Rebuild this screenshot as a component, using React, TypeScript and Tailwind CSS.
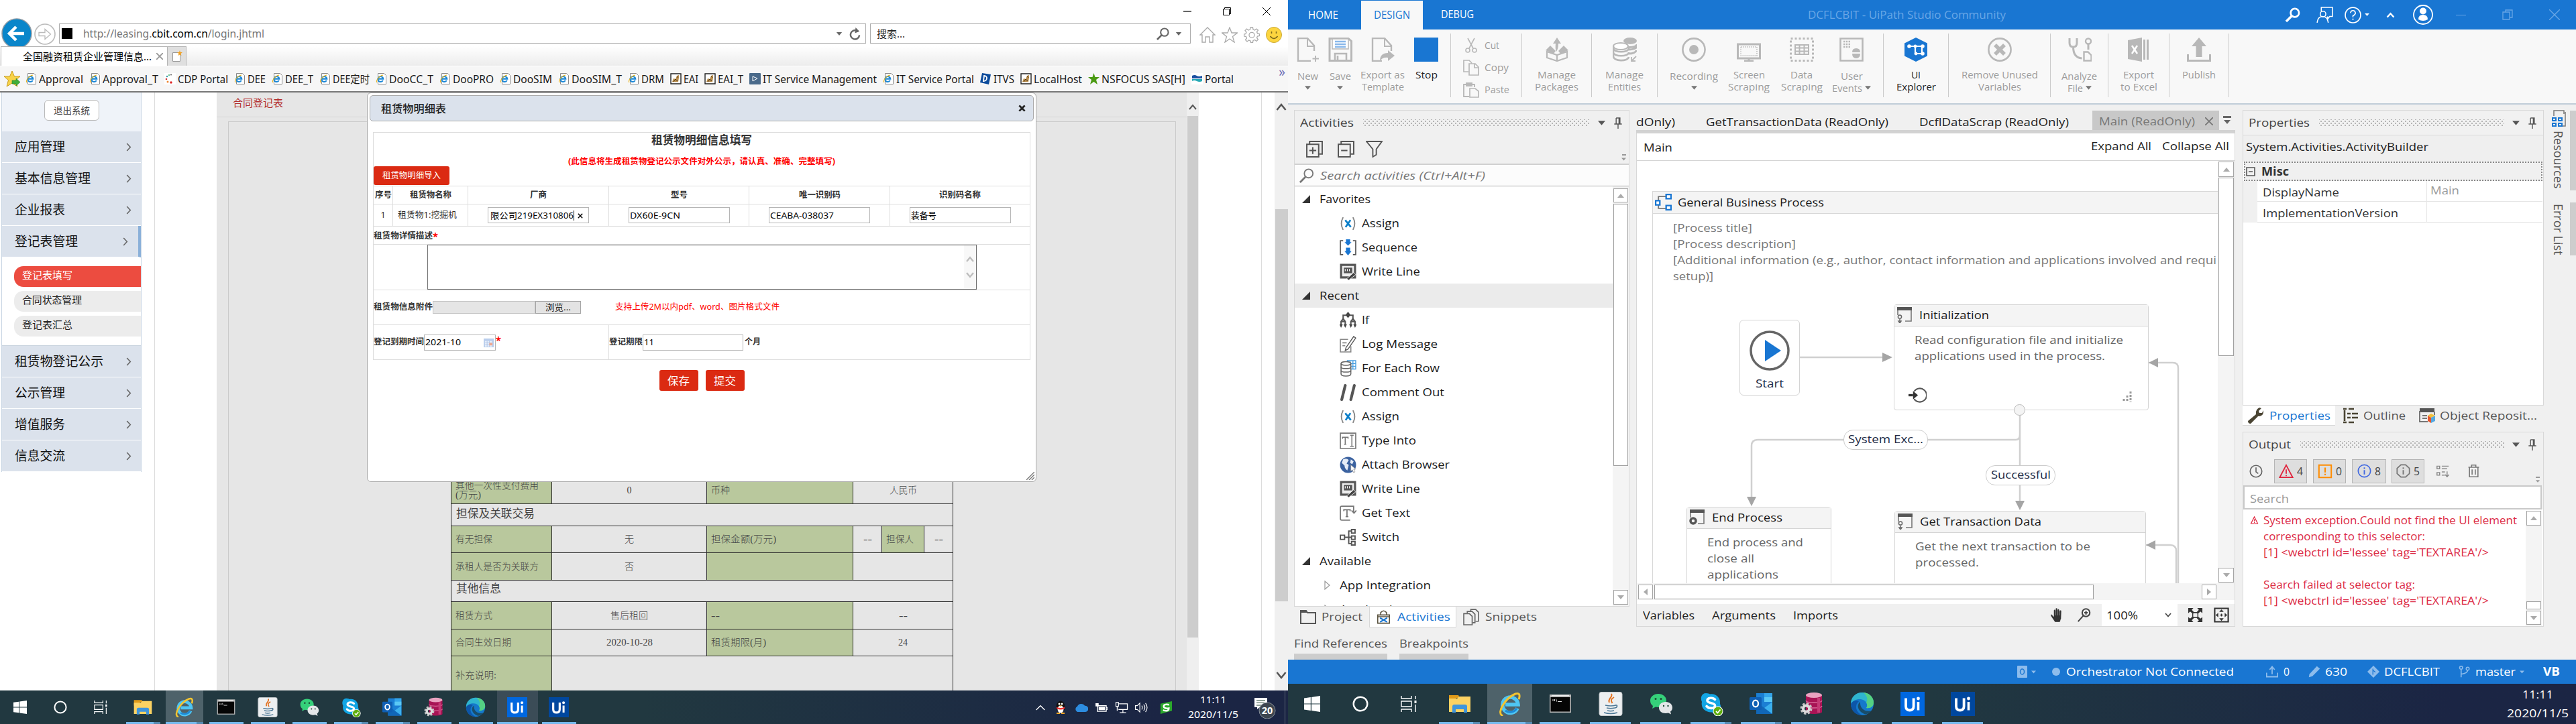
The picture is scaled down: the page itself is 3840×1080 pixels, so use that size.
import React, { useLayoutEffect, useRef } from "react";

type Kids = { className?: string; children?: React.ReactNode };

/* One line of text stretched or condensed to the width of its box. */
function Fit({ className = "", children }: Kids) {
  const outer = useRef<HTMLSpanElement>(null);
  const inner = useRef<HTMLSpanElement>(null);
  useLayoutEffect(() => {
    const o = outer.current, i = inner.current;
    if (!o || !i) return;
    i.style.transform = "none";
    i.style.transform = `scaleX(${o.clientWidth / i.getBoundingClientRect().width})`;
  });
  return (
    <span ref={outer} className={"block shrink-0 whitespace-nowrap " + className}>
      <span ref={inner} className="inline-block origin-left">{children}</span>
    </span>
  );
}

function Svg({ className = "", vb = "0 0 24 24", children }: Kids & { vb?: string }) {
  return <svg viewBox={vb} className={"block shrink-0 " + className} fill="none">{children}</svg>;
}

const Down = ({ className = "w-[9px] h-[6px] text-[#777]" }: { className?: string }) => (
  <Svg vb="0 0 10 6" className={className}><path d="M0 0h10L5 6z" fill="currentColor" /></Svg>
);

/* ---------- Taskbar icons ---------- */
const WinLogo = () => (
  <Svg className="size-full"><path d="M0 3.4 9.8 2v9.5H0zM11 1.9 24 0v11.5H11zM0 12.6h9.8V22L0 20.6zM11 12.6h13V24l-13-1.9z" fill="#fff" /></Svg>
);
const Cortana = () => <Svg className="size-full"><circle cx="12" cy="12" r="10.3" stroke="#fff" strokeWidth="2.4" /></Svg>;
const TaskView = () => (
  <Svg className="size-full"><path d="M1 0v4h15V0M1 24v-4h15v4M1 8h15v8H1zM22 0v5M22 13v11" stroke="#fff" strokeWidth="1.4" /><path d="M20.5 7h3v4h-3z" fill="#fff" /></Svg>
);
const Folder = () => (
  <Svg vb="0 0 36 36" className="size-full">
    <path d="M2 5h14l2 4h-5l-2 6H2z" fill="#e09b1a" /><path d="M2 10h12l3-3h17v23H2z" fill="#fbd263" />
    <path d="M7 31V22q0-3 3-3h16q3 0 3 3v9h-5v-5H12v5z" fill="#3f95dc" />
  </Svg>
);
const IELogo = () => (
  <Svg vb="0 0 36 36" className="size-full">
    <path d="M29 24.5A11.6 11.6 0 1 1 30 19H11" stroke="#4fc6f3" strokeWidth="5.6" />
    <path d="M28 24.5A11.6 11.6 0 0 1 11 28" stroke="#1d8ad6" strokeWidth="3" />
    <path d="M6 35C-2 31 11 9 26 3q8-2.5 5.500 7" stroke="#f2c430" strokeWidth="3" strokeLinecap="round" />
  </Svg>
);
const Cmd = () => (
  <Svg vb="0 0 36 36" className="size-full">
    <path d="M2 4h32v27H2z" fill="#b9b9b9" /><path d="M3.500 8h29v21.500h-29z" fill="#050505" /><path d="M5 5.500h26" stroke="#eee" strokeWidth="1.500" />
    <path d="M7 11v3M9.500 11v3M11.500 10.500l1 4M14 14.500h6" stroke="#ddd" />
  </Svg>
);
const Java = () => (
  <Svg vb="0 0 36 36" className="size-full">
    <rect x="1" y="0.500" width="34" height="35" rx="3" fill="#eceff1" stroke="#c3c8cb" />
    <path d="M19 3c3 5-6 7-3 13M23 8c-5 3-5 5-2.500 9" stroke="#e2711f" strokeWidth="2" />
    <path d="M10 20q8 2 16 0M12 24q6 1.500 12 0M13 28q5 1.500 10 0M25 20c4-1 3 4-1 4M8 31q10 3 20 0" stroke="#4d7896" strokeWidth="1.700" />
  </Svg>
);
const WeChat = () => (
  <Svg vb="0 0 36 36" className="size-full">
    <path d="M14 3c7 0 12 4.500 12 10s-5 10-12 10l-4-.500L5 25l1-4c-3-2-4-5-4-8C2 7.500 7 3 14 3z" fill="#35d07a" />
    <path d="M25 15c6 0 10 4 10 8.500 0 2.500-1 4.500-3 6l1 4-4-2-4 .500c-6 0-10-3.500-10-8.500S19 15 25 15z" fill="#e4e6e8" />
    <g fill="#1c4a35"><circle cx="10" cy="10.500" r="1.500" /><circle cx="18" cy="10.500" r="1.500" /><circle cx="22" cy="21" r="1.200" /><circle cx="28.500" cy="21" r="1.200" /></g>
  </Svg>
);
const Skype = () => (
  <Svg vb="0 0 36 36" className="size-full">
    <path d="M10 2c3 0 5 1 6 1.500C25 2 32 9 31 18c3 6 0 14-7 14-3 0-4-1-5-1.500C9 31 2 24 4 15 1 9 4 2 10 2z" fill="#12a5e4" />
    <path d="M23.500 11.500c-3-3.500-11.500-3-11.500 1.500 0 5 11.500 2.500 11.500 7.500 0 5-9 5-12.500 1" stroke="#fff" strokeWidth="3.600" strokeLinecap="round" />
    <circle cx="28" cy="29" r="7.500" fill="#fff" /><circle cx="28" cy="29" r="6.500" fill="#5fae0d" /><path d="m25 29 2.500 2.500 4-5" stroke="#fff" strokeWidth="1.800" />
  </Svg>
);
const Outlook = () => (
  <Svg vb="0 0 36 36" className="size-full">
    <path d="M10 2h24v31H10z" fill="#1b7fd4" /><path d="M22 2h12v12H22z" fill="#34a5ea" /><path d="M22 8h12v7H22z" fill="#5ac8f5" />
    <path d="m10 15 12 9 12-9v18H10z" fill="#1167b7" /><path d="m22 24 12-9v18z" fill="#3bb0ee" /><rect y="8" width="18" height="19" rx="1.500" fill="#0f5fb4" />
    <ellipse cx="9" cy="17.500" rx="4" ry="4.800" stroke="#fff" strokeWidth="2.300" />
  </Svg>
);
const Sql = () => (
  <Svg vb="0 0 36 36" className="size-full">
    <path d="M9 5v25c0 4 24 4 24 0V5z" fill="#a81455" /><ellipse cx="21" cy="5" rx="12" ry="4" fill="#e9a3c1" />
    <path d="M9 13c0 4 24 4 24 0M9 21c0 4 24 4 24 0" stroke="#d8699a" strokeWidth="1.300" /><path d="M28 9v22" stroke="#c53a76" strokeWidth="4" />
    <circle cx="9.500" cy="25" r="7.500" stroke="#c4c4c4" strokeWidth="3" strokeDasharray="3.400 2.490" /><circle cx="9.500" cy="25" r="4.600" stroke="#dcdcdc" strokeWidth="4" />
  </Svg>
);
const Edge = () => (
  <Svg vb="0 0 36 36" className="size-full">
    <circle cx="18" cy="18" r="17" fill="#1579cb" /><path d="M1 18C1 7 9 1 18 1c11 0 17 8 17 15 0 6-5 9-11 8 0 0 3-3 0-8C20 9 6 9 1 18z" fill="#2fb5cf" />
    <path d="M20 1c10 1 15 8 15 15 0 6-5 9-11 8 0 0 3-3 0-8 3-5 1-10-4-15z" fill="#54d183" />
    <path d="M15 15c-6 4-4 14 6 18 5 1 9-2 11-5-8 3-18-2-17-13z" fill="#1b3f49" opacity=".75" />
    <path d="M13 14C6 20 8 30 18 35 8 35 1 28 1 18c3-5 8-6 12-4z" fill="#0d56a8" />
  </Svg>
);
const Ui = ({ dark }: { dark?: boolean }) => (
  <div className={"flex size-full items-center justify-center text-white " + (dark ? "bg-[#00479e]" : "bg-[#0067df]")}>
    <Svg vb="0 0 36 36" className="size-full">
      <path d="M8 9.500v12q0 6 5.800 6t5.800-6v-12" stroke="#fff" strokeWidth="3.800" /><path d="M26.500 15v12.500" stroke="#fff" strokeWidth="3.600" /><circle cx="26.500" cy="10" r="2.400" fill="#fff" />
    </Svg>
  </div>
);

const apps = [
  { i: <Folder />, multi: true }, { i: <IELogo />, multi: true, on: true }, { i: <Cmd /> }, { i: <Java /> }, { i: <WeChat /> },
  { i: <Skype />, multi: true }, { i: <Outlook />, multi: true }, { i: <Sql /> }, { i: <Edge /> }, { i: <Ui />, lit: true }, { i: <Ui dark /> },
];

function Taskbar({ big, children }: Kids & { big?: boolean }) {
  return (
    <div className={"flex shrink-0 bg-linear-to-r from-[#213840] from-50% to-[#1b2544] to-90% " + (big ? "h-[60px]" : "h-[50px]")}>
      {[<WinLogo />, <Cortana />, <TaskView />].map((g, k) => (
        <div key={k} className={"flex h-full items-center justify-center " + (big ? "w-[72px]" : "w-[60px]")}>
          <div className={big ? "size-[24px]" : "size-[20px]"}>{g}</div>
        </div>
      ))}
      <div className="ml-[2px] flex">
        {apps.map((a, k) => (
          <div key={k} className={"flex flex-col items-center " + (big ? "w-[75px]" : "w-[62px]")}>
            <div className={"flex flex-1 items-center justify-center " + (a.on ? "bg-[#4e626a] " : a.lit && !big ? "bg-[#3b4c57] " : "") + (big ? "w-[67px]" : a.lit ? "w-[61px]" : "w-[56px]")}>
              <div className={"mt-[3px] " + (big ? "size-[36px]" : "size-[30px]")}>{a.i}</div>
            </div>
            <div className={"flex h-[3px] " + (a.on ? (big ? "w-[67px]" : "w-[56px]") : a.lit && !big ? "w-[61px]" : big ? "w-[61px]" : "w-[51px]")}>
              <div className="flex-1 bg-[#76b9ed]" />
              {a.multi && <div className="w-[10px] bg-[#5689b0]" />}
            </div>
          </div>
        ))}
      </div>
      {children}
    </div>
  );
}

/* ---------- Browser ---------- */
const PageE = () => (
  <Svg vb="0 0 17 17" className="size-[17px]">
    <path d="M3.500.500h9l3 3v13h-12z" fill="#fff" stroke="#8a8a8a" /><path d="M10.800 11A4 4 0 1 1 11.300 8.600H4" stroke="#1b87d6" strokeWidth="2.100" /><path d="M2 14C0 11 5 4 11 3" stroke="#e8b41d" strokeWidth="1.200" />
  </Svg>
);
const CdpIcon = () => (
  <Svg vb="0 0 17 17" className="size-[17px]"><path d="M0 0h17v17H0z" fill="#fff" /><g><circle cx="4" cy="5" r="1.200" fill="#39a" /><circle cx="3" cy="9" r="1.300" fill="#c33" /><circle cx="5" cy="13" r="1.500" fill="#e83" /><circle cx="10" cy="2.500" r="1" fill="#555" /><circle cx="10" cy="14" r="1.700" fill="#d22" /><circle cx="7" cy="3" r="1" fill="#3a6" /></g></Svg>
);
const CatIcon = () => (
  <Svg vb="0 0 17 17" className="size-[17px]"><path d="M1 1h15v15H1z" fill="#fff" stroke="#222" strokeWidth="1.400" /><path d="M3 13 5 8l3 1 2-5 3-1v4l-1 6z" fill="#b98d4b" /><path d="m5 13 3-4 3 3M10 5l2 2" stroke="#4a3415" /></Svg>
);
const PlayIcon = () => <Svg vb="0 0 17 17" className="size-[17px]"><rect width="17" height="17" rx="1" fill="#4a6a8a" /><path d="m5 5 7 3-7 4z" stroke="#fff" /></Svg>;
const DIcon = () => <Svg vb="0 0 17 17" className="size-[17px]"><path d="m3 0 13 2-3 15L0 14z" fill="#0b4b9b" /><path d="m6 4-1 8c6 0 7-8 1-8z" stroke="#fff" strokeWidth="1.800" /></Svg>;
const GreenStar = () => <Svg vb="0 0 17 17" className="size-[17px]"><path d="m8.500 0 2 6H17l-5 4 2 7-5.500-4L3 17l2-7-5-4h6.500z" fill="#4a9a12" /></Svg>;
const PortalIcon = () => <Svg vb="0 0 17 17" className="size-[17px]"><path d="M0 0h17v17H0z" fill="#fff" /><path d="M1 4q4-2 7 0t8 0v4H1z" fill="#1b4fa0" /><path d="M1 9h15v3q-4 2-8 0t-7 0z" fill="#27a9b5" /></Svg>;

const favorites = [
  { n: "Approval", w: "w-[66px]" }, { n: "Approval_T", w: "w-[83px]" }, { n: "CDP Portal", w: "w-[75px]", i: <CdpIcon /> },
  { n: "DEE", w: "w-[27px]" }, { n: "DEE_T", w: "w-[42px]" }, { n: "DEE定时", w: "w-[55px]" }, { n: "DooCC_T", w: "w-[66px]" },
  { n: "DooPRO", w: "w-[61px]" }, { n: "DooSIM", w: "w-[58px]" }, { n: "DooSIM_T", w: "w-[75px]" }, { n: "DRM", w: "w-[34px]" },
  { n: "EAI", w: "w-[22px]", i: <CatIcon /> }, { n: "EAI_T", w: "w-[38px]", i: <CatIcon /> },
  { n: "IT Service Management", w: "w-[170px]", i: <PlayIcon /> }, { n: "IT Service Portal", w: "w-[116px]" },
  { n: "ITVS", w: "w-[31px]", i: <DIcon /> }, { n: "LocalHost", w: "w-[72px]", i: <CatIcon /> },
  { n: "NSFOCUS SAS[H]", w: "w-[125px]", i: <GreenStar /> }, { n: "Portal", w: "w-[43px]", i: <PortalIcon /> },
];

function MenuItem({ n, w, active }: { n: string; w: string; active?: boolean }) {
  return (
    <div className={"flex h-[47px] items-center border-b border-white bg-[#dbe2ec] pl-[19px] text-[19px] text-[#111] " + (active ? "border-r-[4px] border-r-[#8ab0d9] pr-[15px]" : "pr-[14px]")}>
      <Fit className={w}>{n}</Fit>
      <Svg vb="0 0 8 14" className="ml-auto h-[13px] w-[8px]"><path d="m1 1 5.500 6L1 13" stroke="#666" strokeWidth="1.700" /></Svg>
    </div>
  );
}

function SubItem({ n, w, active }: { n: string; w: string; active?: boolean }) {
  return (
    <div className={"ml-[18px] flex h-[31px] items-center rounded-l-[14px] pl-[12px] text-[15px] " + (active ? "bg-[#ec4c40] text-white" : "bg-[#ececec] text-[#222]")}>
      <Fit className={w + " -mt-[4px]"}>{n}</Fit>
    </div>
  );
}

function Field({ className = "", children }: Kids) {
  return <div className={"flex h-[24px] items-center border border-[#b5b5b5] bg-white pt-px pl-px text-[13px] text-black " + className}>{children}</div>;
}

function LeaseDialog() {
  const b = "flex shrink-0 items-center justify-center border-r border-[#ddd] ";
  return (
    <div className="absolute top-0 left-[547px] flex h-[581px] w-[998px] flex-col rounded-[6px] border border-[#aaa] bg-white text-[#333]">
      <div className="mx-[3px] mt-[3px] flex h-[39px] shrink-0 items-center rounded-[5px] border border-[#aaa] bg-[#dbe2ec] pr-[11px] pl-[16px]">
        <Fit className="w-[97px] text-[16px] font-medium text-[#222]">租赁物明细表</Fit>
        <Svg vb="0 0 12 12" className="ml-auto size-[11px]"><path d="m1.500 1.500 9 9m0-9-9 9" stroke="#222" strokeWidth="3" /></Svg>
      </div>
      <div className="mx-[8px] mt-[16px] flex flex-col border border-[#ddd] text-[12.5px]">
        <div className="flex h-[22px] items-center justify-center"><Fit className="w-[150px] text-[17px] font-bold">租赁物明细信息填写</Fit></div>
        <div className="mt-[14px] flex h-[14px] items-center justify-center">
          <Fit className="w-[398px] font-bold text-[#f00]">(此信息将生成租赁物登记公示文件对外公示，请认真、准确、完整填写)</Fit>
        </div>
        <div className="mb-px flex h-[28px] w-[113px] items-center justify-center rounded-[3px] bg-[#db2a12]"><Fit className="w-[87px] text-white">租赁物明细导入</Fit></div>
        <div className="flex h-[27px] border-t border-[#ddd] font-bold">
          <div className={b + "w-[29px]"}><Fit className="w-[25px]">序号</Fit></div>
          <div className={b + "w-[112px]"}><Fit className="w-[62px]">租赁物名称</Fit></div>
          <div className={b + "w-[210px]"}><Fit className="w-[25px]">厂商</Fit></div>
          <div className={b + "w-[209px]"}><Fit className="w-[25px]">型号</Fit></div>
          <div className={b + "w-[210px]"}><Fit className="w-[62px]">唯一识别码</Fit></div>
          <div className="flex flex-1 items-center justify-center"><Fit className="w-[62px]">识别码名称</Fit></div>
        </div>
        <div className="flex h-[33px] border-t border-[#ddd]">
          <div className={b + "w-[29px]"}>1</div>
          <div className={b + "w-[112px] pr-[13px]"}><Fit className="ml-[4px] w-[88px]">租赁物1:挖掘机</Fit></div>
          <div className={b + "w-[210px]"}>
            <Field className="w-[151px]">
              <Fit className="ml-[2px] w-[124px]">限公司219EX310806</Fit><span className="h-[15px] w-px bg-black" />
              <Svg vb="0 0 10 10" className="ml-[5px] size-[8px]"><path d="m1 1 8 8m0-8-8 8" stroke="#000" strokeWidth="1.800" /></Svg>
            </Field>
          </div>
          <div className={b + "w-[209px]"}><Field className="w-[151px]"><Fit className="w-[75px]">DX60E-9CN</Fit></Field></div>
          <div className={b + "w-[210px]"}><Field className="w-[151px]"><Fit className="w-[95px]">CEABA-038037</Fit></Field></div>
          <div className="flex flex-1 items-center justify-center"><Field className="w-[151px]"><Fit className="w-[38px]">装备号</Fit></Field></div>
        </div>
        <div className="flex h-[27px] items-center border-t border-[#ddd] pt-[2px] font-bold"><Fit className="w-[88px]">租赁物详情描述</Fit><Fit className="w-[8px] text-[15px] leading-[16px] text-[#f00]">*</Fit></div>
        <div className="flex h-[68px] border-t border-[#ddd]">
          <div className="ml-[80px] flex h-[67px] w-[819px] justify-end border border-[#707070]">
            <div className="flex w-[18px] flex-col items-center justify-between bg-[#f8f8f8] py-[16px]">
              <Svg vb="0 0 12 9" className="h-[9px] w-[12px]"><path d="m1 8 5-6 5 6" stroke="#bdbdbd" strokeWidth="2.400" /></Svg>
              <Svg vb="0 0 12 9" className="h-[9px] w-[12px]"><path d="m1 1 5 6 5-6" stroke="#bdbdbd" strokeWidth="2.400" /></Svg>
            </div>
          </div>
        </div>
        <div className="flex h-[52px] items-center border-t border-[#ddd]">
          <Fit className="w-[88px] font-bold">租赁物信息附件</Fit>
          <div className="h-[19px] w-[153px] border border-[#c4c4c4] bg-[#e5e5e5]" />
          <div className="flex h-[19px] w-[68px] items-center justify-center border border-[#a5a5a5] bg-[#e3e3e3] text-[13px] text-[#222]"><Fit className="w-[38px]">浏览...</Fit></div>
          <Fit className="ml-[51px] w-[245px] text-[#f00]">支持上传2M以内pdf、word、图片格式文件</Fit>
        </div>
        <div className="flex h-[52px] border-t border-[#ddd]">
          <div className="flex w-[351px] items-center border-r border-[#ddd]">
            <Fit className="w-[75px] font-bold">登记到期时间</Fit>
            <Field className="w-[107px]">
              <Fit className="w-[53px]">2021-10</Fit>
              <Svg vb="0 0 16 16" className="mr-[2px] ml-auto size-[15px]"><path d="M0 1h16v14H0z" fill="#b9cdec" /><path d="M2 5h11v9H2z" fill="#e7effa" /><path d="M5.500 5v9M2 8h11M2 11h11M9 5v9" stroke="#9fb6e0" strokeWidth=".700" /><path d="M9 8h5v4H9z" fill="#f0a890" /></Svg>
            </Field>
            <Fit className="-mt-[6px] w-[8px] text-[15px] font-bold text-[#f00]">*</Fit>
          </div>
          <div className="flex items-center">
            <Fit className="w-[50px] font-bold">登记期限</Fit>
            <Field className="w-[150px]"><Fit className="w-[15px]">11</Fit></Field>
            <Fit className="ml-[2px] w-[24px] font-bold">个月</Fit>
          </div>
        </div>
      </div>
      <div className="mt-[15px] flex justify-center gap-[11px] text-[16px] text-white">
        <div className="flex h-[31px] w-[58px] items-center justify-center rounded-[3px] bg-[#db2a12]"><Fit className="w-[33px]">保存</Fit></div>
        <div className="flex h-[31px] w-[58px] items-center justify-center rounded-[3px] bg-[#db2a12]"><Fit className="w-[33px]">提交</Fit></div>
      </div>
      <Svg vb="0 0 12 12" className="mt-auto mr-[2px] mb-[2px] size-[12px] self-end"><path d="M0 12 12 0M4 12l8-8M8 12l4-4" stroke="#777" strokeWidth="1.400" /></Svg>
    </div>
  );
}

const Cell = ({ className = "", green, children }: Kids & { green?: boolean }) => (
  <div className={"flex items-center border-r border-[#2b2b2b] " + (green ? "bg-[#b9c89d] pl-[6px] " : "justify-center ") + className}>{children}</div>
);

function ContractTable() {
  const row = "flex border-t border-[#2b2b2b] ";
  return (
    <div className="ml-[331px] mt-[529px] flex w-[749px] flex-col border-x border-[#2b2b2b] font-['Liberation_Serif','Noto_Sans_CJK_SC',serif] text-[14px] font-light text-[#444]">
      <div className={row + "h-[40px]"}>
        <Cell green className="w-[150px]"><div className="leading-[14px]"><Fit className="w-[124px]">其他一次性支付费用</Fit><Fit className="w-[38px]">(万元)</Fit></div></Cell>
        <Cell className="w-[231px]"><Fit className="w-[7px]">0</Fit></Cell>
        <Cell green className="w-[218px]"><Fit className="w-[28px]">币种</Fit></Cell>
        <div className="flex flex-1 items-center justify-center"><Fit className="w-[41px]">人民币</Fit></div>
      </div>
      <div className={row + "h-[33px] items-center pb-[3px] pl-[7px] text-[17px] font-normal"}><Fit className="w-[117px]">担保及关联交易</Fit></div>
      <div className={row + "h-[40px]"}>
        <Cell green className="w-[150px]"><Fit className="w-[55px]">有无担保</Fit></Cell>
        <Cell className="w-[231px]"><Fit className="w-[14px]">无</Fit></Cell>
        <Cell green className="w-[218px]"><Fit className="w-[97px]">担保金额(万元)</Fit></Cell>
        <Cell className="w-[43px]"><Fit className="w-[13px]">--</Fit></Cell>
        <Cell green className="w-[63px]"><Fit className="w-[41px]">担保人</Fit></Cell>
        <div className="flex flex-1 items-center justify-center"><Fit className="w-[13px]">--</Fit></div>
      </div>
      <div className={row + "h-[41px]"}>
        <Cell green className="w-[150px]"><Fit className="w-[124px]">承租人是否为关联方</Fit></Cell>
        <Cell className="w-[231px]"><Fit className="w-[14px]">否</Fit></Cell>
        <Cell green className="w-[218px]" />
      </div>
      <div className={row + "h-[32px] items-center pb-[5px] pl-[7px] text-[17px] font-normal"}><Fit className="w-[67px]">其他信息</Fit></div>
      <div className={row + "h-[41px]"}>
        <Cell green className="w-[150px]"><Fit className="w-[55px]">租赁方式</Fit></Cell>
        <Cell className="w-[231px]"><Fit className="w-[56px]">售后租回</Fit></Cell>
        <Cell green className="w-[218px]"><Fit className="w-[13px]">--</Fit></Cell>
        <div className="flex flex-1 items-center justify-center"><Fit className="w-[13px]">--</Fit></div>
      </div>
      <div className={row + "h-[40px]"}>
        <Cell green className="w-[150px]"><Fit className="w-[83px]">合同生效日期</Fit></Cell>
        <Cell className="w-[231px]"><Fit className="w-[69px]">2020-10-28</Fit></Cell>
        <Cell green className="w-[218px]"><Fit className="w-[82px]">租赁期限(月)</Fit></Cell>
        <div className="flex flex-1 items-center justify-center"><Fit className="w-[14px]">24</Fit></div>
      </div>
      <div className={row + "h-[60px]"}>
        <Cell green className="w-[150px]"><Fit className="-mt-[3px] w-[61px]">补充说明:</Fit></Cell>
      </div>
    </div>
  );
}

function Browser() {
  return (
    <div className="flex h-[1080px] w-[1920px] shrink-0 flex-col overflow-hidden bg-white font-['Noto_Sans','Noto_Sans_CJK_SC',sans-serif]">
      <div className="flex h-[34px] shrink-0 items-center justify-end gap-[47px] pr-[26px] text-black">
        <Svg vb="0 0 12 12" className="size-[12px]"><path d="M0 6h12" stroke="currentColor" strokeWidth="1.200" /></Svg>
        <Svg vb="0 0 12 12" className="size-[12px]"><path d="M.500 2.500h9v9h-9zM2.500 2.500v-2h9v9h-2" stroke="currentColor" /></Svg>
        <Svg vb="0 0 12 12" className="size-[12px]"><path d="m0 0 12 12M12 0 0 12" stroke="currentColor" /></Svg>
      </div>
      <div className="flex h-[35px] shrink-0 items-center pl-[2px]">
        <Svg vb="0 0 46 46" className="-mt-[4px] size-[46px]"><circle cx="23" cy="23" r="22" fill="#0a86ca" stroke="#8f9ba5" strokeWidth="1.500" /><path d="M34 23H13M22 13 12 23l10 10" stroke="#fff" strokeWidth="4.500" /></Svg>
        <Svg vb="0 0 32 32" className="ml-[3px] -mt-[2px] size-[32px]"><circle cx="16" cy="16" r="15" stroke="#bbb" strokeWidth="1.600" fill="#fff" /><path d="M7 13.500h9V8.500l8.500 7.500-8.500 7.500v-5H7z" stroke="#bbb" strokeWidth="1.300" /></Svg>
        <div className="-mt-[3px] ml-[5px] flex h-[30px] w-[1203px] items-center border border-[#acacac] pr-[7px] pl-[3px]">
          <div className="size-[16px] bg-black" />
          <Fit className="ml-[16px] w-[270px] text-[16px] text-[#777]">http://leasing.<span className="text-black">cbit.com.cn</span>/login.jhtml</Fit>
          <Down className="ml-auto h-[5px] w-[10px] text-[#666]" />
          <Svg vb="0 0 18 20" className="ml-[10px] h-[19px] w-[17px]"><path d="M14 6.500A7 7 0 1 0 16 12" stroke="#666" strokeWidth="2.600" /><path d="m10 0 6 6-7 3z" fill="#666" /></Svg>
        </div>
        <div className="-mt-[3px] ml-[6px] flex h-[30px] w-[478px] items-center border border-[#acacac] pr-[12px] pl-[9px]">
          <Fit className="w-[42px] text-[15px] text-[#222]">搜索...</Fit>
          <Svg vb="0 0 20 20" className="ml-auto size-[19px]"><circle cx="12.500" cy="7.500" r="6" stroke="#666" strokeWidth="2.200" /><path d="m8 12-7 7" stroke="#666" strokeWidth="2.800" /></Svg>
          <Down className="ml-[9px] h-[5px] w-[10px] text-[#666]" />
        </div>
        <div className="ml-[13px] flex gap-[9px]">
          <Svg className="size-[24px]"><path d="M1 12 12 1l11 11h-3v11h-5v-8h-6v8H4V12z" stroke="#aaa" strokeWidth="1.400" /></Svg>
          <Svg className="size-[24px]"><path d="m12 1 3 8h8.500l-7 5.500L19 23l-7-5-7 5 2.500-8.500L.500 9H9z" stroke="#aaa" strokeWidth="1.300" /></Svg>
          <Svg className="size-[24px]"><path d="m10 1-.500 3-2.500 1-2.500-2L2 5.500l2 2.500-1 2.500-2.500.500v3l3 .500 1 2.500-2 2.500L5 22l2.500-2 2.500 1 .500 2.500h3l.500-3 2.500-1 2.500 2 2.500-2.500-2-2.500 1-2.500 3-.500v-3l-3-.500-1-2.500 2-2.500L19 3l-2.500 2L14 4l-.500-3z" stroke="#aaa" strokeWidth="1.300" /><circle cx="12" cy="12.300" r="4" stroke="#aaa" strokeWidth="1.300" /></Svg>
          <Svg className="size-[24px]"><circle cx="12" cy="12" r="11.500" fill="#fcd53f" stroke="#c9a93a" /><path d="M6.500 14q5.500 7 11 0M8.500 7v3M15.500 7v3" stroke="#7d6a1c" strokeWidth="1.600" /></Svg>
        </div>
      </div>
      <div className="flex h-[29px] shrink-0 bg-linear-to-b from-white to-[#ececec] pl-px">
        <div className="flex w-[249px] items-center border border-b-0 border-[#b5b5b5] bg-white pr-[6px] pl-[32px] text-[15px] text-black">
          <Fit className="w-[192px]">全国融资租赁企业管理信息...</Fit>
          <Svg vb="0 0 10 10" className="ml-auto size-[10px]"><path d="m0 0 10 10m0-10L0 10" stroke="#999" strokeWidth="1.800" /></Svg>
        </div>
        <div className="flex w-[28px] items-center justify-center border-t border-r border-[#b5b5b5] bg-[#dfdfdf]">
          <Svg vb="0 0 16 18" className="h-[18px] w-[16px]"><path d="M1.500 3.500h11v13h-11z" fill="#fff" stroke="#999" /><path d="m12 0 1 3h3l-2.500 2 1 3L12 6.500 9.500 8l1-3L8 3h3z" fill="#f0a020" /></Svg>
        </div>
      </div>
      <div className="flex h-[40px] shrink-0 items-center border-t border-b-2 border-t-white border-b-[#767676] bg-[#f6f6f6] pl-[6px] text-[16px] text-[#1a1a1a]">
        <Svg className="size-[24px]"><path d="m12 0 3.500 8H24l-6.500 5.500L20 23l-8-5-8 5 2.500-9.500L0 8h8.500z" fill="#f8d348" stroke="#c79a1b" /><path d="M12 14h6v-3l6 5.500-6 5.500v-3h-6z" fill="#3fae3a" stroke="#2a7c27" strokeWidth=".600" /></Svg>
        <div className="ml-[8px] flex items-center gap-[9px]">
          {favorites.map((f) => (
            <div key={f.n} className="flex items-center gap-[3px]">{f.i ?? <PageE />}<Fit className={f.w}>{f.n}</Fit></div>
          ))}
        </div>
        <span className="ml-auto self-start pr-[4px] text-[19px] leading-[16px] text-[#6b6bb5]">»</span>
      </div>
      <div className="relative flex h-[892px] shrink-0 overflow-hidden">
        <div className="w-[230px]">
          <div className="ml-[2px] flex w-[209px] flex-col border-x border-[#c9d6e4]">
            <div className="flex h-[58px] items-start justify-center bg-[#eff3f9] pt-[11px]">
              <div className="flex h-[31px] w-[82px] items-center justify-center rounded-[6px] border border-[#b9b9b9] bg-white text-[14px] text-[#444]"><Fit className="w-[54px]">退出系统</Fit></div>
            </div>
            <MenuItem n="应用管理" w="w-[75px]" />
            <MenuItem n="基本信息管理" w="w-[113px]" />
            <MenuItem n="企业报表" w="w-[75px]" />
            <MenuItem n="登记表管理" w="w-[94px]" active />
            <div className="flex h-[132px] flex-col gap-[6px] border-b border-[#c9d3de] pt-[13px]">
              <SubItem n="登记表填写" w="w-[75px]" active />
              <SubItem n="合同状态管理" w="w-[89px]" />
              <SubItem n="登记表汇总" w="w-[75px]" />
            </div>
            <MenuItem n="租赁物登记公示" w="w-[132px]" />
            <MenuItem n="公示管理" w="w-[75px]" />
            <MenuItem n="增值服务" w="w-[75px]" />
            <MenuItem n="信息交流" w="w-[75px]" />
          </div>
        </div>
        <div className="flex w-[1651px] border-x border-[#dcdcdc] pl-[92px]">
          <div className="flex w-[1464px] bg-[#e6e6e6]">
            <div className="w-[1446px]">
              <div className="flex h-[37px] items-center border-b border-[#d5d5d5] pb-[5px] pl-[24px] text-[15px] text-[#b32d2d]"><Fit className="w-[75px]">合同登记表</Fit></div>
              <div className="mt-[6px] ml-[17px] flex h-[900px] w-[1413px] border border-[#cacaca]"><ContractTable /></div>
            </div>
            <div className="flex w-[18px] flex-col items-center bg-[#efefef] pt-[17px]">
              <Svg vb="0 0 12 9" className="h-[9px] w-[12px]"><path d="m1 8 5-6 5 6" stroke="#555" strokeWidth="2" /></Svg>
              <div className="mt-[9px] h-[778px] w-[16px] bg-[#cdcdcd]" />
            </div>
          </div>
        </div>
        <div className="ml-[19px] flex flex-1 flex-col items-center bg-[#f0f0f0] pt-[15px]">
          <Svg vb="0 0 16 12" className="h-[12px] w-[16px]"><path d="m1.500 11 6.500-8 6.500 8" stroke="#555" strokeWidth="2.600" /></Svg>
          <div className="mt-[147px] h-[585px] w-[19px] bg-[#cdcdcd]" />
          <Svg vb="0 0 16 12" className="mt-[105px] h-[12px] w-[16px]"><path d="m1.500 1 6.500 8 6.500-8" stroke="#555" strokeWidth="2.600" /></Svg>
        </div>
        <LeaseDialog />
      </div>
      <Taskbar>
        <div className="ml-auto flex items-center pr-[4px] text-white">
          <Svg vb="0 0 16 10" className="h-[9px] w-[16px]"><path d="m1 9 7-7 7 7" stroke="#fff" strokeWidth="1.500" /></Svg>
          <Svg vb="0 0 18 20" className="ml-[13px] h-[20px] w-[18px]"><ellipse cx="9" cy="9.500" rx="6.500" ry="9" fill="#111" /><ellipse cx="9" cy="13" rx="4.500" ry="5.500" fill="#fff" /><path d="M3 9.500q6 3 12 0v2.500q-6 3-12 0z" fill="#e33" /><circle cx="7" cy="5" r="1.500" fill="#fff" /><circle cx="11" cy="5" r="1.500" fill="#fff" /><path d="M6.500 7.500h5L9 9zM3 18h5v2H3zM10 18h5v2h-5z" fill="#f5a623" /></Svg>
          <Svg vb="0 0 22 16" className="ml-[11px] h-[15px] w-[21px]"><path d="M5 15a5 5 0 0 1 0-9 7 7 0 0 1 12-1 5 5 0 0 1 1 10z" fill="#2d8de0" /></Svg>
          <Svg vb="0 0 20 16" className="ml-[10px] h-[15px] w-[19px]"><path d="M4 5h14v9H4zM18 8h2v3h-2z" stroke="#fff" strokeWidth="1.500" /><path d="M6 7h10v5H6zM1 1h5v5H1z" fill="#fff" /></Svg>
          <Svg vb="0 0 20 18" className="ml-[11px] h-[17px] w-[20px]"><path d="M5 3h14v9H5M12 12v5M7 17h10M1 1h4v6H1zM3 7v7" stroke="#fff" strokeWidth="1.300" /></Svg>
          <Svg vb="0 0 20 18" className="ml-[9px] h-[17px] w-[20px]"><path d="M1 6h3l4-4v14l-4-4H1zM11 6q2 3 0 6M14 4q4 5 0 10M17 2q5 7 0 14" stroke="#fff" strokeWidth="1.200" /></Svg>
          <Svg vb="0 0 20 20" className="ml-[18px] size-[19px]"><path d="m1 4 18-4v15L1 20z" fill="#2ba82b" /><path d="M14.500 5.500Q6 4 6 8t8 3q0 6-9 3" stroke="#fff" strokeWidth="2.600" /></Svg>
          <div className="ml-[22px] flex w-[76px] flex-col items-center text-[14px] leading-[22px]"><Fit className="w-[39px]">11:11</Fit><Fit className="w-[75px]">2020/11/5</Fit></div>
          <div className="ml-[24px] flex h-[34px] w-[33px] items-start">
            <Svg vb="0 0 33 34" className="h-[34px] w-[33px]"><path d="M0 3h19v14H8l-4 3v-3H0z" fill="#fff" /><path d="M3 7h13M3 10.500h13M3 14h13" stroke="#243" strokeWidth="1.200" /><circle cx="19" cy="22" r="12" fill="#3d4550" stroke="#8b939c" /><text x="19" y="27" textAnchor="middle" fontSize="14.500" fontWeight="700" fill="#fff">20</text></Svg>
          </div>
          <div className="ml-[12px] h-[50px] w-px bg-[#5a6475]" />
        </div>
      </Taskbar>
    </div>
  );
}

/* ---------- Studio ---------- */
const G = "#b8b8b8";
const ribbonIcons = {
  fresh: <Svg vb="0 0 36 36" className="size-[36px]"><path d="M27 20V12L17 1H3v34h19" stroke={G} strokeWidth="2.400" /><path d="M17 1v12h10M29 27v9M24.500 31.500H34" stroke={G} strokeWidth="2" /></Svg>,
  save: <Svg vb="0 0 36 36" className="size-[36px]"><path d="M2 1.500h28l4.500 4v29H2z" stroke={G} strokeWidth="3" /><path d="M6 2h24v15H6z" fill="#fff" stroke={G} strokeWidth="1.500" /><path d="M10 6h16M10 10h16M10 14h16" stroke="#8ab8ea" strokeWidth="2.400" /><path d="M10 34V24h17v10M14 27v7" stroke={G} strokeWidth="2.600" /></Svg>,
  exp: <Svg vb="0 0 36 36" className="size-[36px]"><path d="M31 20V12L21 1H3v34h14" stroke={G} strokeWidth="2.400" /><path d="M21 1v12h10" stroke={G} strokeWidth="2" /><path d="M14 35q0-12 12-12v-4l10 8-10 8v-5q-8-1-12 5z" fill={G} /></Svg>,
  pack: <Svg vb="0 0 36 36" className="size-[36px]"><path d="M18 0l6 9h-4q0 8-3 12-2-5-1-12h-4z" fill={G} /><path d="m3 21 15 5 15-5v9l-15 5-15-5zM18 26v9" stroke={G} strokeWidth="2.200" /><path d="m1 19 7-7 8 8-3 4zM35 19l-7-7-8 8 3 4z" fill={G} /></Svg>,
  ent: <Svg vb="0 0 36 36" className="size-[36px]"><ellipse cx="26" cy="5" rx="10" ry="5" fill={G} /><path d="M16 12c4 4 20 3 20-2M24 18c6 0 12-2 12-5M24 24c6 0 11-2 11-5" stroke={G} strokeWidth="3" /><ellipse cx="12" cy="13" rx="11" ry="5" fill="#fff" stroke={G} strokeWidth="2" /><path d="M1 16c0 7 23 7 23 0M1 22c0 7 23 7 23 0M1 28c0 8 22 8 23 1M1 13v15" stroke={G} strokeWidth="2.600" /><path d="m35 28-7 7m0-6v6h6" stroke={G} strokeWidth="1.800" /></Svg>,
  rec: <Svg vb="0 0 36 36" className="size-[36px]"><circle cx="18" cy="18" r="16.600" stroke={G} strokeWidth="2.600" /><circle cx="18" cy="18" r="7" fill={G} /></Svg>,
  screen: <Svg vb="0 0 36 36" className="size-[36px]"><path d="M1.500 10h33v21h-33zM18 31v4M11 35h14" stroke={G} strokeWidth="3" /><path d="M6 14h24v13H6z" stroke={G} strokeWidth="1.500" strokeDasharray="1.500 1.500" /></Svg>,
  data: <Svg vb="0 0 36 36" className="size-[36px]"><path d="M1.500 1.500h33v33h-33z" stroke={G} strokeWidth="3" strokeDasharray="3 3" /><path d="M8 11h20v14H8zM8 15.500h20M8 20.500h20M14.500 11v14M21.500 11v14" stroke={G} strokeWidth="2" /></Svg>,
  user: <Svg vb="0 0 36 36" className="size-[36px]"><path d="M1.500 1.500h33v33h-33z" stroke={G} strokeWidth="2.600" /><path d="M6 6h10M6 10h10M6 14h10" stroke={G} strokeWidth="2.400" strokeDasharray="2.400 1.400" /><path d="M19 22q0-6 6-6t6 6zM19 24h12q0 7-6 7t-6-7z" fill={G} /></Svg>,
  uiex: <Svg vb="0 0 36 36" className="size-[36px]"><path d="M18 0l17 8.500v19L18 36 1 27.500v-19z" fill="#1976d2" /><path d="M7 13h20M17 13v11h10M27 13v11" stroke="#fff" strokeWidth="2.200" /><g fill="#fff"><circle cx="8" cy="13" r="2.800" /><circle cx="17" cy="13" r="2.400" /><circle cx="28" cy="13" r="2.800" /><circle cx="18" cy="24" r="2.400" /><circle cx="28" cy="24" r="2.800" /></g></Svg>,
  remove: <Svg vb="0 0 36 36" className="size-[36px]"><circle cx="18" cy="18" r="16.600" stroke={G} strokeWidth="2.600" /><path d="m11 11 14 14m0-14L11 25" stroke={G} strokeWidth="5.500" /></Svg>,
  analyze: <Svg vb="0 0 36 36" className="size-[36px]"><path d="M3 1v7q0 6 5.500 6T14 8V1M8.500 14q0 16 13 17M31 10v8" stroke={G} strokeWidth="3" /><circle cx="31" cy="5.500" r="4" stroke={G} strokeWidth="2.400" /><path d="M24.500 21.500h6l5 5v8h-11z" stroke={G} strokeWidth="2.400" /></Svg>,
  excel: <Svg vb="0 0 36 36" className="size-[36px]"><path d="m2 4 21-4v36L2 32zM25 3h3v30h-3zM30 3h3v30h-3z" fill={G} /><path d="m8 12 8 12M16 12 8 24" stroke="#fff" strokeWidth="2.500" /></Svg>,
  publish: <Svg vb="0 0 36 36" className="size-[36px]"><path d="M18 0l11 13h-6.500v16h-9V13H7z" fill={G} /><path d="M1.500 25v9.500h33V25" stroke={G} strokeWidth="3" /></Svg>,
  stop: <div className="size-[36px] bg-[#1976d2]" />,
};

function RibbonButton({ cell, icon, lines, drop, dark }: { cell: string; icon: React.ReactNode; lines: [string, string][]; drop?: "below" | "inline"; dark?: boolean }) {
  return (
    <div className={"flex shrink-0 flex-col items-center pt-[12px] text-[15px] leading-[18px] " + cell + (dark ? " text-[#222]" : " text-[#9c9c9c]")}>
      {icon}
      <div className={"flex flex-col items-center " + (drop ? "mt-[12px]" : "mt-[10px]")}>
        {lines.map(([t, w], k) => (
          <div key={t} className="flex h-[18px] items-center gap-[4px]">
            <Fit className={w}>{t}</Fit>
            {drop === "inline" && k === lines.length - 1 && <Down />}
          </div>
        ))}
        {drop === "below" && <Down className="mt-[6px] h-[6px] w-[9px] text-[#777]" />}
      </div>
    </div>
  );
}
const Sep = () => <div className="mt-[6px] h-[95px] w-px shrink-0 bg-[#cbcbcb]" />;

function Ribbon() {
  const r = ribbonIcons;
  const small = "flex h-[33px] items-center";
  return (
    <div className="flex h-[112px] shrink-0 border-b-2 border-[#c0cdd8] bg-[#f8f8f8]">
      <RibbonButton cell="w-[59px]" icon={r.fresh} lines={[["New", "w-[31px]"]]} drop="below" />
      <RibbonButton cell="w-[37px]" icon={r.save} lines={[["Save", "w-[32px]"]]} drop="below" />
      <RibbonButton cell="w-[90px]" icon={r.exp} lines={[["Export as", "w-[66px]"], ["Template", "w-[63px]"]]} />
      <RibbonButton cell="w-[40px] mr-[16px]" icon={r.stop} lines={[["Stop", "w-[33px]"]]} dark />
      <Sep />
      <div className="flex w-[105px] flex-col pt-[7px] pl-[18px] text-[15px] text-[#9c9c9c]">
        <div className={small}><Svg className="size-[24px]"><path d="M7 1l8 15M17 1 9 16" stroke={G} strokeWidth="1.600" /><circle cx="7" cy="19" r="3" stroke={G} strokeWidth="1.600" /><circle cx="17" cy="19" r="3" stroke={G} strokeWidth="1.600" /></Svg><Fit className="ml-[8px] w-[22px]">Cut</Fit></div>
        <div className={small}><Svg className="size-[24px]"><path d="M8 18H1V1h8l4 4M9 6h9l5 5v12H9zM17 6v6h6" stroke={G} strokeWidth="1.700" /></Svg><Fit className="ml-[8px] w-[36px]">Copy</Fit></div>
        <div className={small}><Svg className="size-[24px]"><path d="M9 22H1V4h16v4M5 6V2h8v4z" stroke={G} strokeWidth="1.900" /><path d="M10 10h8l5 4v9H10z" stroke={G} strokeWidth="1.700" /></Svg><Fit className="ml-[8px] w-[37px]">Paste</Fit></div>
      </div>
      <Sep />
      <RibbonButton cell="w-[103px]" icon={r.pack} lines={[["Manage", "w-[57px]"], ["Packages", "w-[65px]"]]} />
      <Sep />
      <RibbonButton cell="w-[97px]" icon={r.ent} lines={[["Manage", "w-[57px]"], ["Entities", "w-[49px]"]]} />
      <Sep />
      <RibbonButton cell="w-[108px]" icon={r.rec} lines={[["Recording", "w-[72px]"]]} drop="below" />
      <RibbonButton cell="w-[56px]" icon={r.screen} lines={[["Screen", "w-[47px]"], ["Scraping", "w-[62px]"]]} />
      <RibbonButton cell="w-[101px]" icon={r.data} lines={[["Data", "w-[33px]"], ["Scraping", "w-[62px]"]]} />
      <RibbonButton cell="w-[48px] mr-[23px]" icon={r.user} lines={[["User", "w-[33px]"], ["Events", "w-[45px]"]]} drop="inline" />
      <Sep />
      <RibbonButton cell="w-[96px]" icon={r.uiex} lines={[["UI", "w-[14px]"], ["Explorer", "w-[59px]"]]} dark />
      <Sep />
      <RibbonButton cell="w-[151px]" icon={r.remove} lines={[["Remove Unused", "w-[114px]"], ["Variables", "w-[64px]"]]} />
      <Sep />
      <RibbonButton cell="w-[85px]" icon={r.analyze} lines={[["Analyze", "w-[53px]"], ["File", "w-[23px]"]]} drop="inline" />
      <Sep />
      <RibbonButton cell="w-[90px]" icon={r.excel} lines={[["Export", "w-[46px]"], ["to Excel", "w-[55px]"]]} />
      <Sep />
      <RibbonButton cell="w-[88px]" icon={r.publish} lines={[["Publish", "w-[50px]"]]} />
      <Sep />
    </div>
  );
}

function PanelHeader({ title, w }: { title: string; w: string }) {
  return (
    <div className="flex h-[36px] shrink-0 items-center pl-[8px] text-[#444]">
      <Fit className={w}>{title}</Fit>
      <div className="ml-[14px] h-[10px] flex-1 bg-[radial-gradient(#b5b5b5_1px,transparent_1.300px),radial-gradient(#b5b5b5_1px,transparent_1.300px)] bg-[length:6px_6px] bg-[position:0_0,3px_3px]" />
      <Down className="ml-[12px] h-[7px] w-[11px] text-[#555]" />
      <Svg vb="0 0 12 18" className="mr-[10px] ml-[13px] h-[17px] w-[12px]"><path d="M3 1h6v9M3 1v9M0 10.500h12M6 10v8M7.500 1v9" stroke="#555" strokeWidth="1.500" /></Svg>
    </div>
  );
}

const scrollBtn = "flex shrink-0 items-center justify-center border border-[#a5a5a5] bg-white text-[#aaa] ";
const Up = () => <Svg vb="0 0 10 6" className="h-[6px] w-[10px]"><path d="M0 6h10L5 0z" fill="currentColor" /></Svg>;

const Q = "#555";
const actIcons: Record<string, React.ReactNode> = {
  Assign: <Svg className="size-[25px]"><path d="M5 3q-5 9 0 18M19 3q5 9 0 18" stroke="#888" strokeWidth="1.800" /><path d="m8 7 8 10M15.500 7l-7 10" stroke="#0c7fc9" strokeWidth="2.600" /></Svg>,
  Sequence: <Svg className="size-[25px]"><path d="M5 2H1v20h4M19 2h4v20h-4" stroke={Q} strokeWidth="1.600" /><path d="M9 0h6v4h2l-5 5-5-5h2zM9 12h6v5h2l-5 6-5-6h2z" fill="#1976d2" /></Svg>,
  "Write Line": <Svg className="size-[25px]"><path d="M2 2h20v18H2z" fill="#eee" stroke={Q} strokeWidth="3" /><path d="M6 6h12v8H6z" fill={Q} /><path d="M8 8v3M11 8v3M14 8v3" stroke="#fff" /><path d="m10 22 10-9 3 3-10 8z" fill="#444" stroke="#fff" strokeWidth=".800" /></Svg>,
  If: <Svg className="size-[25px]"><path d="M5 11V5h14v6" stroke={Q} strokeWidth="2" /><path d="m12 0 3.500 4.500L12 9 8.500 4.500z" fill="#444" /><path d="M5 10 2 14v5M5 10l3 4v5M19 10l-3 4v5M19 10l3 4v5M2 14h6M16 14h6" stroke={Q} strokeWidth="2" /><path d="M-.500 18h5L2 23zM5.500 18h5L8 23zM13.500 18h5L16 23zM19.500 18h5L22 23z" fill="#444" /></Svg>,
  "Log Message": <Svg className="size-[25px]"><path d="M12 5H1v18h15v-8M4 10h6M4 14h4" stroke="#888" strokeWidth="1.600" /><path d="M9 17 20 1l3 2-11 16-4 2z" fill="#fff" stroke={Q} strokeWidth="1.300" /></Svg>,
  "For Each Row": <Svg className="size-[25px]"><path d="M11 1h12v12H11zM11 5h12M11 9h12M15 1v12M19 1v12" stroke="#4a9fe0" strokeWidth="1.300" /><path d="M2 5v15c0 4 14 4 14 0V5" fill="#fff" stroke="#666" strokeWidth="1.500" /><ellipse cx="9" cy="5" rx="7" ry="2.600" fill="#fff" stroke="#666" strokeWidth="1.500" /><path d="M2 10c0 3 14 3 14 0M2 15c0 3 14 3 14 0" stroke="#666" strokeWidth="1.500" /></Svg>,
  "Comment Out": <Svg className="size-[25px]"><path d="M8 2 3 22M21 2l-5 20" stroke={Q} strokeWidth="4" strokeLinecap="round" /></Svg>,
  "Type Into": <Svg className="size-[25px]"><path d="M1 1h22v22H1z" stroke="#777" strokeWidth="1.600" /><path d="M4 9V7h8v2M8 7v10M6.500 17h3M15 4h5M15 20h5M17.500 4v16" stroke="#777" strokeWidth="1.500" /></Svg>,
  "Attach Browser": <Svg className="size-[25px]"><circle cx="12" cy="12" r="11.500" fill="#3b62a0" /><path d="M5 4q5-2 8 1l-3 5 3 2-2 8q-4-3-4-7L3 9zM16 4l4 3-2 4-3-2z" fill="#e6edf7" /><path d="M16 12v9l2-2 2 4 2-1-2-4h3z" fill="#fff" stroke="#888" strokeWidth=".700" /></Svg>,
  "Get Text": <Svg className="size-[25px]"><path d="M15 22H3q-2 0-2-2V4q0-2 2-2h17v9M17 8l3.500 4L24 8" stroke="#777" strokeWidth="1.700" /><path d="M6 9V7h9v2M10.500 7v10M8.500 17h4" stroke="#777" strokeWidth="1.700" /></Svg>,
  Switch: <Svg className="size-[25px]"><path d="M1 9h6v6H1zM7 12h5M17 3h-4v18h4M12 12h5" stroke={Q} strokeWidth="1.900" /><path d="M17 1h5v5h-5zM17 10h5v5h-5zM17 18h5v5h-5z" stroke={Q} strokeWidth="1.900" /></Svg>,
};

const tree: { k: "cat" | "act" | "sub"; n: string; w: string; hl?: boolean }[] = [
  { k: "cat", n: "Favorites", w: "w-[76px]" },
  { k: "act", n: "Assign", w: "w-[56px]" }, { k: "act", n: "Sequence", w: "w-[83px]" }, { k: "act", n: "Write Line", w: "w-[87px]" },
  { k: "cat", n: "Recent", w: "w-[59px]", hl: true },
  { k: "act", n: "If", w: "w-[11px]" }, { k: "act", n: "Log Message", w: "w-[113px]" }, { k: "act", n: "For Each Row", w: "w-[116px]" },
  { k: "act", n: "Comment Out", w: "w-[123px]" }, { k: "act", n: "Assign", w: "w-[56px]" }, { k: "act", n: "Type Into", w: "w-[81px]" },
  { k: "act", n: "Attach Browser", w: "w-[131px]" }, { k: "act", n: "Write Line", w: "w-[87px]" }, { k: "act", n: "Get Text", w: "w-[72px]" },
  { k: "act", n: "Switch", w: "w-[56px]" }, { k: "cat", n: "Available", w: "w-[77px]" },
  { k: "sub", n: "App Integration", w: "w-[136px]" }, { k: "sub", n: "App Invoker", w: "w-[101px]" },
];

function ActivitiesColumn() {
  return (
    <div className="ml-[9px] flex w-[500px] shrink-0 flex-col">
      <div className="flex h-[741px] flex-col border border-[#d8d8d8]">
        <PanelHeader title="Activities" w="w-[80px]" />
        <div className="flex h-[43px] shrink-0 items-center pr-[4px] pl-[17px]">
          <Svg className="size-[25px]"><path d="M1 5h17v18H1zM5 4V1h18v18h-4M9.500 9v10M4.500 14h10" stroke={Q} strokeWidth="1.900" /></Svg>
          <Svg className="ml-[22px] size-[25px]"><path d="M1 5h17v18H1zM5 4V1h18v18h-4M5 14h9" stroke={Q} strokeWidth="1.900" /></Svg>
          <Svg className="ml-[17px] size-[25px]"><path d="M1 1h22l-8 11v8l-5 3V12z" stroke={Q} strokeWidth="1.800" /></Svg>
          <div className="mt-[24px] ml-auto flex flex-col items-center gap-[3px]"><div className="h-[2px] w-[6px] bg-[#999]" /><Down className="h-[5px] w-[7px] text-[#999]" /></div>
        </div>
        <div className="flex h-[34px] shrink-0 items-center border-t-2 border-b border-t-[#d0d0d0] border-b-[#a9a9a9] bg-[#fcfcfc] pl-[7px] text-[#777]">
          <Svg className="size-[22px]"><circle cx="15" cy="8.500" r="7" stroke="#777" strokeWidth="2" /><path d="m10 14-9 9" stroke="#777" strokeWidth="3" /></Svg>
          <Fit className="ml-[9px] w-[246px] italic">Search activities (Ctrl+Alt+F)</Fit>
        </div>
        <div className="flex flex-1 overflow-hidden bg-white">
          <div className="h-[626px] w-[474px] overflow-hidden pt-px text-[#1a1a1a]">
            {tree.map((t, k) => (
              <div key={k} className={"flex h-[36px] items-center " + (t.hl ? "bg-[#ebebeb] " : "") + (t.k === "cat" ? "pl-[11px]" : t.k === "act" ? "pl-[67px]" : "pl-[44px]")}>
                {t.k === "cat" && <Svg vb="0 0 12 12" className="mr-[14px] size-[12px]"><path d="M12 0v12H0z" fill="#333" /></Svg>}
                {t.k === "sub" && <Svg vb="0 0 9 14" className="mr-[14px] h-[14px] w-[9px]"><path d="M1 1v12l7-6z" stroke="#999" strokeWidth="1.200" /></Svg>}
                {t.k === "act" && <div className="mr-[8px]">{actIcons[t.n]}</div>}
                <Fit className={t.w}>{t.n}</Fit>
              </div>
            ))}
          </div>
          <div className="flex w-[24px] flex-col bg-[#f4f4f4] px-px pt-[3px] pb-[2px]">
            <div className={scrollBtn + "h-[21px]"}><Up /></div>
            <div className="mt-[2px] h-[391px] border border-[#a0a0a0] bg-white" />
            <div className={scrollBtn + "mt-auto h-[22px]"}><Down className="h-[6px] w-[10px] text-[#aaa]" /></div>
          </div>
        </div>
      </div>
      <div className="flex h-[30px] items-center pl-[9px] text-[#555]">
        <Svg className="size-[24px]"><path d="M1 3h8l2 3h12v16H1z" stroke={Q} strokeWidth="2" /><path d="M1 3h8l2 3H1z" fill={Q} /></Svg>
        <Fit className="ml-[8px] w-[61px]">Project</Fit>
        <div className="ml-[10px] flex h-[31px] items-center border border-t-0 border-[#d8d8d8] bg-white pr-[8px] pl-[10px]">
          <Svg className="h-[26px] w-[21px]"><path d="M2 9h20v14H2zM7 9V5q5-6 10 0v4M2 12h20" stroke="#5a5340" strokeWidth="1.800" /><path d="m6 14 12 7M18 14 6 21" stroke="#1976d2" strokeWidth="2.400" /></Svg>
          <Fit className="ml-[10px] w-[79px] text-[#1976d2]">Activities</Fit>
        </div>
        <Svg className="ml-[10px] size-[25px]"><path d="M1 7h8l4 4v12H1zM6 6V4h7l4 4v12h-3M11 3V1h7l4 4v13h-4" stroke="#666" strokeWidth="1.600" /></Svg>
        <Fit className="ml-[8px] w-[77px]">Snippets</Fit>
      </div>
      <div className="mt-[13px] flex gap-[18px] text-[#555]">
        <div className="h-[36px] border-b-[9px] border-[#cdcdcd]"><Fit className="w-[139px] leading-[24px]">Find References</Fit></div>
        <div className="h-[36px] border-b-[9px] border-[#cdcdcd]"><Fit className="w-[103px] leading-[24px]">Breakpoints</Fit></div>
      </div>
    </div>
  );
}

const StateIcon = ({ end }: { end?: boolean }) => (
  <Svg className="size-[24px]">
    <path d="M2 12V3h20v18H13" stroke="#777" strokeWidth="1.600" /><path d="M1 0h22v5H1z" fill="#555" />
    {end ? <circle cx="6" cy="17" r="4" stroke="#555" strokeWidth="3.500" /> : <path d="M5 18v3M3 21h4l-2 3z" stroke="#666" strokeWidth="1.500" />}
    {!end && <circle cx="5" cy="14.500" r="2.600" stroke="#666" strokeWidth="1.500" />}
  </Svg>
);

function StateNode({ pos, title, w, end, lines, children }: Kids & { pos: string; title: string; w: string; end?: boolean; lines: [string, string][] }) {
  return (
    <div className={"absolute flex flex-col rounded-[4px] border border-[#d4d4d4] bg-white " + pos}>
      <div className="flex h-[32px] shrink-0 items-center border-b border-[#d4d4d4] bg-[#f4f4f4] pb-[2px] pl-[3px] text-[#1a1a1a]"><StateIcon end={end} /><Fit className={"ml-[10px] " + w}>{title}</Fit></div>
      <div className="flex flex-col pt-[8px] pl-[30px] leading-[24px] text-[#666]">{lines.map(([t, c]) => <Fit key={t} className={c}>{t}</Fit>)}</div>
      {children}
    </div>
  );
}

function Canvas() {
  return (
    <div className="relative h-[630px] w-[866px] overflow-hidden bg-white">
      <div className="absolute top-[45px] left-[23px] h-[700px] w-[900px] border border-[#d8d8d8]">
        <div className="flex h-[33px] items-center border-b border-[#d8d8d8] bg-[#f4f4f4] pb-px pl-[3px] text-[#1a1a1a]">
          <Svg className="size-[25px]"><path d="M16 4H5v6M5 16v5h11" stroke="#777" strokeWidth="1.800" /><path d="M16 1h7v6h-7zM1 10h6v6H1zM16 17h7v6h-7z" fill="#fff" stroke="#1976d2" strokeWidth="2.200" /></Svg>
          <Fit className="ml-[9px] w-[218px]">General Business Process</Fit>
        </div>
        <div className="flex flex-col pt-[9px] pl-[30px] leading-[24px] text-[#777]">
          <Fit className="w-[118px]">[Process title]</Fit>
          <Fit className="w-[183px]">[Process description]</Fit>
          <Fit className="w-[810px]">[Additional information (e.g., author, contact information and applications involved and requi</Fit>
          <Fit className="w-[60px]">setup)]</Fit>
        </div>
      </div>
      <svg viewBox="0 0 866 630" className="absolute inset-0 h-full w-full" fill="none" stroke="#d0d0d0" strokeWidth="2.500">
        <path d="M243 293h125M762 301h37q8 0 8 8v330M758 573h37q9 0 9 9v60M571 371v136M571 408q0 8-6 8H180q-9 0-9 9v85" />
        <g fill="#a5a5a5" stroke="none"><path d="M366 286v14l15-7zM763 301l14-7v14zM759 573l14-7v14zM564 507h14l-7 14zM164 501h14l-7 14z" /></g>
      </svg>
      <div className="absolute top-[237px] left-[153px] flex h-[113px] w-[90px] flex-col items-center rounded-[6px] border border-[#d4d4d4] bg-white pt-[15px]">
        <Svg vb="0 0 60 60" className="size-[60px]"><circle cx="30" cy="30" r="28" stroke="#666" strokeWidth="3.500" /><path d="M23 14v32l24-16z" fill="#1976d2" /></Svg>
        <Fit className="mt-[6px] w-[42px] leading-[26px] text-[#222b45]">Start</Fit>
      </div>
      <StateNode pos="left-[383px] top-[214px] h-[158px] w-[380px]" title="Initialization" w="w-[104px]" lines={[["Read configuration file and initialize", "w-[311px]"], ["applications used in the process.", "w-[284px]"]]}>
        <div className="mt-auto flex items-end justify-between pr-[24px] pb-[8px] pl-[21px]">
          <Svg className="size-[27px]"><path d="M7.500 7A9 9 0 1 1 7.500 17" stroke="#555" strokeWidth="1.800" /><path d="M0 12h6" stroke="#333" strokeWidth="3" /><path d="m6 6.500 6.500 5.500L6 17.500z" fill="#333" /></Svg>
          <Svg vb="0 0 16 16" className="mb-[3px] size-[16px]"><path d="M14 0v16M9 6v10M4 11v5" stroke="#999" strokeWidth="3" strokeDasharray="3 2" /></Svg>
        </div>
      </StateNode>
      <StateNode pos="left-[74px] top-[516px] h-[160px] w-[216px]" title="End Process" w="w-[105px]" end lines={[["End process and", "w-[143px]"], ["close all", "w-[70px]"], ["applications", "w-[106px]"]]} />
      <StateNode pos="left-[384px] top-[522px] h-[160px] w-[375px]" title="Get Transaction Data" w="w-[181px]" lines={[["Get the next transaction to be", "w-[261px]"], ["processed.", "w-[95px]"]]} />
      <div className="absolute top-[363px] left-[562px] size-[17px] rounded-full border-[1.500px] border-[#bbb] bg-[#f4f4f4]" />
      <div className="absolute top-[401px] left-[308px] flex h-[30px] w-[126px] items-center justify-center rounded-[14px] border border-[#ccc] bg-white pb-[2px] text-[#222b45]"><Fit className="w-[112px]">System Exc...</Fit></div>
      <div className="absolute top-[454px] left-[520px] flex h-[30px] w-[104px] items-center justify-center rounded-[14px] border border-[#ccc] bg-white pb-[2px] text-[#222b45]"><Fit className="w-[89px]">Successful</Fit></div>
    </div>
  );
}

function DesignerColumn() {
  return (
    <div className="ml-[10px] flex w-[893px] shrink-0 flex-col text-[#222]">
      <div className="flex h-[30px] shrink-0 items-end">
        <div className="flex h-full items-center pt-[5px]">
          <Fit className="w-[58px]">dOnly)</Fit>
          <Fit className="ml-[46px] w-[272px]">GetTransactionData (ReadOnly)</Fit>
          <Fit className="ml-[46px] w-[223px]">DcflDataScrap (ReadOnly)</Fit>
        </div>
        <div className="ml-[35px] flex h-[29px] w-[189px] items-center bg-[#c8c8c8] pt-[2px] pr-[9px] pl-[10px] text-[#777]">
          <Fit className="w-[143px]">Main (ReadOnly)</Fit>
          <Svg vb="0 0 12 12" className="ml-auto size-[12px]"><path d="m0 0 12 12m0-12L0 12" stroke="#777" strokeWidth="1.800" /></Svg>
        </div>
        <div className="mb-[9px] ml-[6px] flex flex-col items-center gap-[3px]"><div className="h-[3px] w-[12px] bg-[#666]" /><Down className="h-[6px] w-[12px] text-[#666]" /></div>
      </div>
      <div className="h-[5px] shrink-0 bg-[#d2d2d2]" />
      <div className="flex h-[706px] flex-col border-x border-[#d8d8d8]">
        <div className="flex h-[41px] shrink-0 items-center border-b border-[#d4d4d4] bg-white pb-[2px] pl-[10px]">
          <Fit className="mt-[4px] w-[43px]">Main</Fit>
          <Fit className="ml-auto w-[90px]">Expand All</Fit>
          <Fit className="mr-[8px] ml-[16px] w-[100px]">Collapse All</Fit>
        </div>
        <div className="flex h-[630px] shrink-0">
          <Canvas />
          <div className="flex w-[25px] flex-col bg-[#f4f4f4] px-px py-px">
            <div className={scrollBtn + "h-[23px]"}><Up /></div>
            <div className="mt-px h-[266px] border border-[#a0a0a0] bg-white" />
            <div className={scrollBtn + "mt-auto h-[22px]"}><Down className="h-[6px] w-[10px] text-[#aaa]" /></div>
          </div>
        </div>
        <div className="flex h-[25px] shrink-0 items-center bg-[#f4f4f4] px-[2px]">
          <div className={scrollBtn + "h-[22px] w-[22px]"}><Svg vb="0 0 6 10" className="h-[10px] w-[6px]"><path d="M6 0v10L0 5z" fill="currentColor" /></Svg></div>
          <div className="ml-[2px] h-[22px] w-[655px] border border-[#a0a0a0] bg-white" />
          <div className={scrollBtn + "mr-[25px] ml-auto h-[22px] w-[22px]"}><Svg vb="0 0 6 10" className="h-[10px] w-[6px]"><path d="M0 0v10l6-5z" fill="currentColor" /></Svg></div>
        </div>
        <div className="h-[7px] shrink-0 bg-white" />
      </div>
      <div className="-mt-[4px] flex h-[34px] shrink-0 items-center border-x border-b border-[#d8d8d8] bg-[#f0f0f0] pl-[9px]">
        <Fit className="w-[77px]">Variables</Fit><Fit className="ml-[26px] w-[95px]">Arguments</Fit><Fit className="ml-[26px] w-[67px]">Imports</Fit>
        <Svg className="ml-auto size-[22px]"><path d="M8 23 2 14q-2-3 0-4l4 4V4q1.500-3 3 0V1q1.500-2 3 0v2q1.500-3 3 0v2q2-3 3.500 0l-.500 12-2 6z" fill="#333" stroke="#f0f0f0" strokeWidth=".500" /><path d="M9 4v8M12 3v9M15.200 4v8" stroke="#aaa" strokeWidth=".800" /></Svg>
        <Svg className="ml-[18px] size-[21px]"><circle cx="15.500" cy="8" r="6.500" stroke="#444" strokeWidth="2.400" /><path d="m11 13-9 10M12.500 8h6M15.500 5v6" stroke="#444" strokeWidth="2.400" /></Svg>
        <div className="ml-[16px] flex h-full w-[113px] items-center bg-white pr-[9px] pl-[7px]"><Fit className="w-[47px]">100%</Fit><Svg vb="0 0 10 7" className="ml-auto h-[7px] w-[10px]"><path d="m1 1 4 4.500L9 1" stroke="#444" strokeWidth="1.700" /></Svg></div>
        <Svg className="ml-[15px] size-[23px]"><path d="M1 1h8L6.500 4l4 4L8 10 4 6.500 1 9zM23 1v8l-3-2.500-4 3.500-2.500-2 4-4L15 1zM1 23v-8l3 2.500L8 14l2.500 2-4 4L9 23zM23 23h-8l2.500-3-4-4L16 14l4 3.500 3-2.500z" fill="#333" /><path d="M8 8h8v8H8z" stroke="#333" strokeWidth="1.500" /></Svg>
        <Svg className="mr-[8px] ml-[16px] size-[23px]"><path d="M1.500 1.500h21v21h-21z" stroke="#333" strokeWidth="2.200" /><path d="m12 3 3.500 4h-7zM12 21l3.500-4h-7zM3 12l4-3.500v7zM21 12l-4-3.500v7z" fill="#333" /><path d="M12 10v4M10 12h4" stroke="#333" strokeWidth="1.400" /></Svg>
      </div>
    </div>
  );
}

function Counter({ className = "", children, n }: Kids & { n: string }) {
  return <div className={"flex h-[36px] items-center justify-center gap-[5px] border border-[#b5b5b5] bg-[#dedede] text-[#444] " + className}>{children}<Fit className="w-[9px]">{n}</Fit></div>;
}

function RightColumn() {
  return (
    <div className="ml-[11px] flex w-[449px] shrink-0 flex-col text-[#333]">
      <div className="flex h-[441px] shrink-0 flex-col border border-[#d8d8d8] bg-white">
        <div className="bg-[#f1f1f1]"><PanelHeader title="Properties" w="w-[91px]" /></div>
        <div className="flex h-[40px] shrink-0 items-center border-t border-[#d8d8d8] bg-[#efefef] pb-[6px] pl-[4px] text-[#222]"><Fit className="w-[272px]">System.Activities.ActivityBuilder</Fit></div>
        <div className="mx-px flex h-[29px] shrink-0 items-center border-2 border-dotted border-[#888] bg-[#f0f0f0] pl-px">
          <Svg vb="0 0 14 14" className="size-[14px]"><path d="M1 1h12v12H1zM4 7h6" stroke="#555" strokeWidth="1.600" /></Svg><Fit className="ml-[9px] w-[41px] font-bold">Misc</Fit>
        </div>
        <div className="mr-px flex h-[62px] shrink-0 bg-[#f0f0f0] pl-[21px]">
          <div className="grid flex-1 grid-cols-[253px_1fr] grid-rows-[31px_31px] border-b border-[#e3e3e3] bg-white">
            <div className="flex items-center border-r border-b border-[#e6e6e6] pt-[3px] pl-[8px]"><Fit className="w-[114px]">DisplayName</Fit></div>
            <div className="flex items-center border-b border-[#e6e6e6] pb-[2px] pl-[5px] text-[#999]"><Fit className="w-[43px]">Main</Fit></div>
            <div className="flex items-center border-r border-[#e6e6e6] pt-[3px] pl-[8px]"><Fit className="w-[202px]">ImplementationVersion</Fit></div>
          </div>
        </div>
      </div>
      <div className="flex h-[30px] shrink-0 items-center text-[#555]">
        <div className="flex h-full w-[138px] items-center border-b border-[#d8d8d8] bg-white pl-[7px]">
          <Svg className="size-[24px]"><path d="M1 20 13 10q-1-7 5-10l3 1-4 4 1 3h4l2-4q1 9-8 9L5 24q-4 0-4-4z" fill="#4a4433" /></Svg><Fit className="ml-[9px] w-[91px] text-[#1976d2]">Properties</Fit>
        </div>
        <Svg className="ml-[11px] size-[24px]"><path d="M1 2h5M9 2h8M7 9h5M14 9h9M7 15h5M14 15h9M1 22h5M9 22h8M3 4v16" stroke="#4a4433" strokeWidth="2.600" /></Svg><Fit className="ml-[7px] w-[63px]">Outline</Fit>
        <Svg className="ml-[20px] size-[24px]"><path d="M1 1h22v6H1z" fill="#555" /><path d="M1 5v16h12M23 6v5M5 12h7M5 16h7" stroke="#777" strokeWidth="2" /><path d="m18 9 6 3-6 3-5-3z" fill="#f3c13a" /><path d="m13 12 5 3v8l-5-3z" fill="#e5562d" /><path d="m24 12-6 3v8l6-3z" fill="#55a8e0" /></Svg><Fit className="ml-[7px] w-[145px]">Object Reposit...</Fit>
      </div>
      <div className="mt-[9px] flex h-[291px] shrink-0 flex-col border border-[#d8d8d8]">
        <PanelHeader title="Output" w="w-[63px]" />
        <div className="flex h-[43px] shrink-0 items-center pl-[9px]">
          <Svg className="size-[20px]"><circle cx="12" cy="12" r="10.500" stroke="#666" strokeWidth="2" /><path d="M12 5v8l4 3" stroke="#666" strokeWidth="2" /></Svg>
          <Counter n="4" className="ml-[17px] w-[49px]"><Svg className="size-[22px]"><path d="M12 2 22.500 22h-21z" stroke="#e0233c" strokeWidth="2" /><path d="M12 9v7M12 18v2" stroke="#e0233c" strokeWidth="2" /></Svg></Counter>
          <Counter n="0" className="ml-[9px] w-[49px]"><Svg className="size-[22px]"><path d="M2 2h20v20H2z" stroke="#ff8c00" strokeWidth="2.200" /><path d="M12 6v8M12 16v2.500" stroke="#ff8c00" strokeWidth="2.400" /></Svg></Counter>
          <Counter n="8" className="ml-[9px] w-[51px]"><Svg className="size-[21px]"><circle cx="12" cy="12" r="10.500" stroke="#4169e1" strokeWidth="2" /><path d="M12 6v2.500M12 10.500V18" stroke="#4169e1" strokeWidth="2.200" /></Svg></Counter>
          <Counter n="5" className="ml-[8px] w-[49px]"><Svg className="size-[21px]"><path d="M8 1.500h8l6.500 6v9l-6.500 6H8l-6.500-6v-9z" stroke="#777" strokeWidth="2" /><path d="M12 6v2.500M12 10.500V18" stroke="#777" strokeWidth="2.200" /></Svg></Counter>
          <Svg className="ml-[18px] size-[19px]"><path d="M1 3h5v5H1zM1 15h5v5H1zM10 3h13M10 8h10M10 14h6M10 20h6M20 13v9M16.500 19l3.500 4 3.500-4" stroke="#888" strokeWidth="1.800" /></Svg>
          <Svg className="ml-[27px] size-[19px]"><path d="M2 5h20M8 4V1h8v3M4 5v18h16V5M9 9v10M15 9v10" stroke="#777" strokeWidth="2" /></Svg>
          <div className="mt-[26px] mr-[5px] ml-auto flex flex-col items-center gap-[3px]"><div className="h-[2px] w-[6px] bg-[#999]" /><Down className="h-[4px] w-[6px] text-[#999]" /></div>
        </div>
        <div className="mr-[2px] flex h-[36px] shrink-0 items-center border-2 border-[#c9c9c9] bg-white pt-[4px] pl-[8px] text-[#999]"><Fit className="w-[58px]">Search</Fit></div>
        <div className="flex flex-1 bg-white pt-[2px] text-[#dc2b45]">
          <Svg className="mt-[8px] ml-[10px] h-[12px] w-[13px]"><path d="M12 2 22 22H2z" stroke="#e0233c" strokeWidth="2.400" /><path d="M12 9v6M12 17v3" stroke="#e0233c" strokeWidth="2.400" /></Svg>
          <div className="ml-[7px] flex flex-col pt-[2px] leading-[24px]">
            <Fit className="w-[378px]">System exception.Could not find the UI element</Fit>
            <Fit className="w-[241px]">corresponding to this selector:</Fit>
            <Fit className="w-[336px]">[1] &lt;webctrl id='lessee' tag='TEXTAREA'/&gt;</Fit>
            <Fit className="mt-[24px] w-[226px]">Search failed at selector tag:</Fit>
            <Fit className="w-[336px]">[1] &lt;webctrl id='lessee' tag='TEXTAREA'/&gt;</Fit>
          </div>
          <div className="mr-[2px] ml-auto flex w-[24px] flex-col bg-[#f4f4f4] px-px pb-[2px]">
            <div className={scrollBtn + "h-[22px]"}><Up /></div>
            <div className="mt-auto h-[12px] border border-[#a0a0a0] bg-white" />
            <div className={scrollBtn + "mt-[2px] h-[21px]"}><Down className="h-[6px] w-[10px] text-[#aaa]" /></div>
          </div>
        </div>
      </div>
    </div>
  );
}

function Studio() {
  return (
    <div className="flex h-[1080px] w-[1920px] shrink-0 flex-col overflow-hidden bg-[#f0f0f0] font-['Open_Sans','Noto_Sans',sans-serif] text-[17px]">
      <div className="flex h-[44px] shrink-0 items-center bg-[#1976d2] text-[15.5px] text-white">
        <Fit className="mt-[2px] ml-[30px] w-[45px]">HOME</Fit>
        <div className="mt-px ml-[34px] flex h-[43px] w-[92px] items-center justify-center bg-[#f8f8f8] text-[#1976d2]"><Fit className="w-[54px]">DESIGN</Fit></div>
        <Fit className="ml-[27px] w-[49px]">DEBUG</Fit>
        <Fit className="ml-[498px] w-[295px] text-[16.5px] text-[#6aa7e6]">DCFLCBIT - UiPath Studio Community</Fit>
        <Svg className="ml-[416px] size-[23px]"><circle cx="15.500" cy="8.500" r="6.500" stroke="#fff" strokeWidth="2.800" /><path d="m11 13-9 9" stroke="#fff" strokeWidth="3.600" /></Svg>
        <Svg className="ml-[24px] size-[25px]"><path d="M7 7V1h16v13h-4l-3 4v-4M1 23q1-9 8-9t8 9" stroke="#fff" strokeWidth="1.500" /><circle cx="9.500" cy="10.500" r="4" stroke="#fff" strokeWidth="1.500" /></Svg>
        <Svg className="ml-[17px] size-[25px]"><circle cx="12" cy="12" r="11" stroke="#fff" strokeWidth="1.600" /><path d="M8.500 9q.500-3.500 3.500-3.500t3.500 3.500q0 2-3.500 4v2M12 17v2" stroke="#fff" strokeWidth="1.600" /></Svg>
        <Down className="ml-[5px] h-[4px] w-[7px] text-white" />
        <Svg vb="0 0 14 10" className="ml-[25px] h-[9px] w-[13px]"><path d="m1.500 8.500 5.500-6 5.500 6" stroke="#fff" strokeWidth="2.600" /></Svg>
        <Svg vb="0 0 30 30" className="ml-[27px] size-[30px]"><circle cx="15" cy="15" r="14" stroke="#fff" strokeWidth="1.800" /><circle cx="15" cy="9.500" r="5" fill="#fff" /><path d="M8 22q0-7 7-7t7 7q-7 4-14 0z" fill="#fff" /></Svg>
        <div className="ml-[34px] h-px w-[15px] bg-[#6aa7e6]" />
        <Svg vb="0 0 16 16" className="ml-[54px] size-[16px]"><path d="M1 4h10v11H1zM5 4V1h10v11h-4" stroke="#6aa7e6" strokeWidth="1.300" /></Svg>
        <Svg vb="0 0 16 16" className="ml-[54px] size-[16px]"><path d="m0 0 16 16M16 0 0 16" stroke="#6aa7e6" strokeWidth="1.300" /></Svg>
      </div>
      <Ribbon />
      <div className="flex h-[828px] shrink-0 overflow-hidden pt-[8px]">
        <ActivitiesColumn />
        <DesignerColumn />
        <RightColumn />
        <div className="flex w-[48px] justify-between pl-[10px] text-[18px] text-[#555]">
          <div className="flex w-[24px] flex-col items-center">
            <Svg vb="0 0 22 25" className="h-[25px] w-[22px]"><path d="M4 9V1h15v5M21 3v21h-4" stroke="#777" strokeWidth="1.500" /><path d="M2 12h5v4H2zM11 12h5v4h-5zM2 20h5v4H2zM11 20h5v4h-5z" stroke="#1976d2" strokeWidth="2" /></Svg>
            <span className="mt-[6px] h-[90px] leading-[22px] [writing-mode:vertical-rl]">Resources</span>
            <span className="mt-[19px] leading-[22px] whitespace-nowrap [writing-mode:vertical-rl]">Error List</span>
          </div>
          <div className="flex w-[9px] flex-col gap-[18px] pt-px"><div className="h-[119px] bg-[#cdcdcd]" /><div className="h-[79px] bg-[#cdcdcd]" /></div>
        </div>
      </div>
      <div className="flex h-[36px] shrink-0 items-center justify-end bg-[#1976d2] pr-[24px] text-white">
        <Svg vb="0 0 15 18" className="h-[18px] w-[15px]"><rect width="15" height="18" rx="1" fill="#8dbcec" /><ellipse cx="7.500" cy="9" rx="3" ry="4" stroke="#1976d2" strokeWidth="1.500" /></Svg>
        <Down className="ml-[6px] h-[5px] w-[7px] text-[#8dbcec]" />
        <div className="ml-[24px] size-[12px] rounded-full bg-[#8dbcec]" />
        <Fit className="ml-[9px] w-[250px]">Orchestrator Not Connected</Fit>
        <Svg className="ml-[48px] size-[18px]"><path d="M12 2v15M7 8l5-6 5 6M1 14v8h22v-8" stroke="#8dbcec" strokeWidth="2.400" /></Svg>
        <Fit className="ml-[8px] w-[9px]">0</Fit>
        <Svg className="ml-[28px] size-[18px]"><path d="M2 17 17 1l6 5L8 21l-7 2z" fill="#8dbcec" /></Svg>
        <Fit className="ml-[7px] w-[33px]">630</Fit>
        <Svg className="ml-[30px] size-[18px]"><path d="m12 0 12 12-12 12L0 12z" fill="#8dbcec" /><path d="M11 6v12M11 9l5 4" stroke="#1976d2" strokeWidth="1.800" /></Svg>
        <Fit className="ml-[7px] w-[83px]">DCFLCBIT</Fit>
        <Svg className="ml-[28px] size-[18px]"><circle cx="5" cy="4" r="3" stroke="#8dbcec" strokeWidth="2" /><circle cx="18" cy="6" r="3" stroke="#8dbcec" strokeWidth="2" /><path d="M5 7v16M18 9q0 6-13 8" stroke="#8dbcec" strokeWidth="2.200" /></Svg>
        <Fit className="ml-[7px] w-[60px]">master</Fit>
        <Down className="ml-[6px] h-[5px] w-[7px] text-[#8dbcec]" />
        <Fit className="ml-[28px] w-[25px] font-bold">VB</Fit>
      </div>
      <Taskbar big>
        <div className="ml-auto flex flex-col items-center justify-center pr-[11px] text-[17px] leading-[28px] text-white"><Fit className="w-[46px]">11:11</Fit><Fit className="w-[92px]">2020/11/5</Fit></div>
      </Taskbar>
    </div>
  );
}

export default function App() {
  return (
    <div className="flex h-[1080px] w-[3840px] overflow-hidden">
      <Browser />
      <Studio />
    </div>
  );
}
